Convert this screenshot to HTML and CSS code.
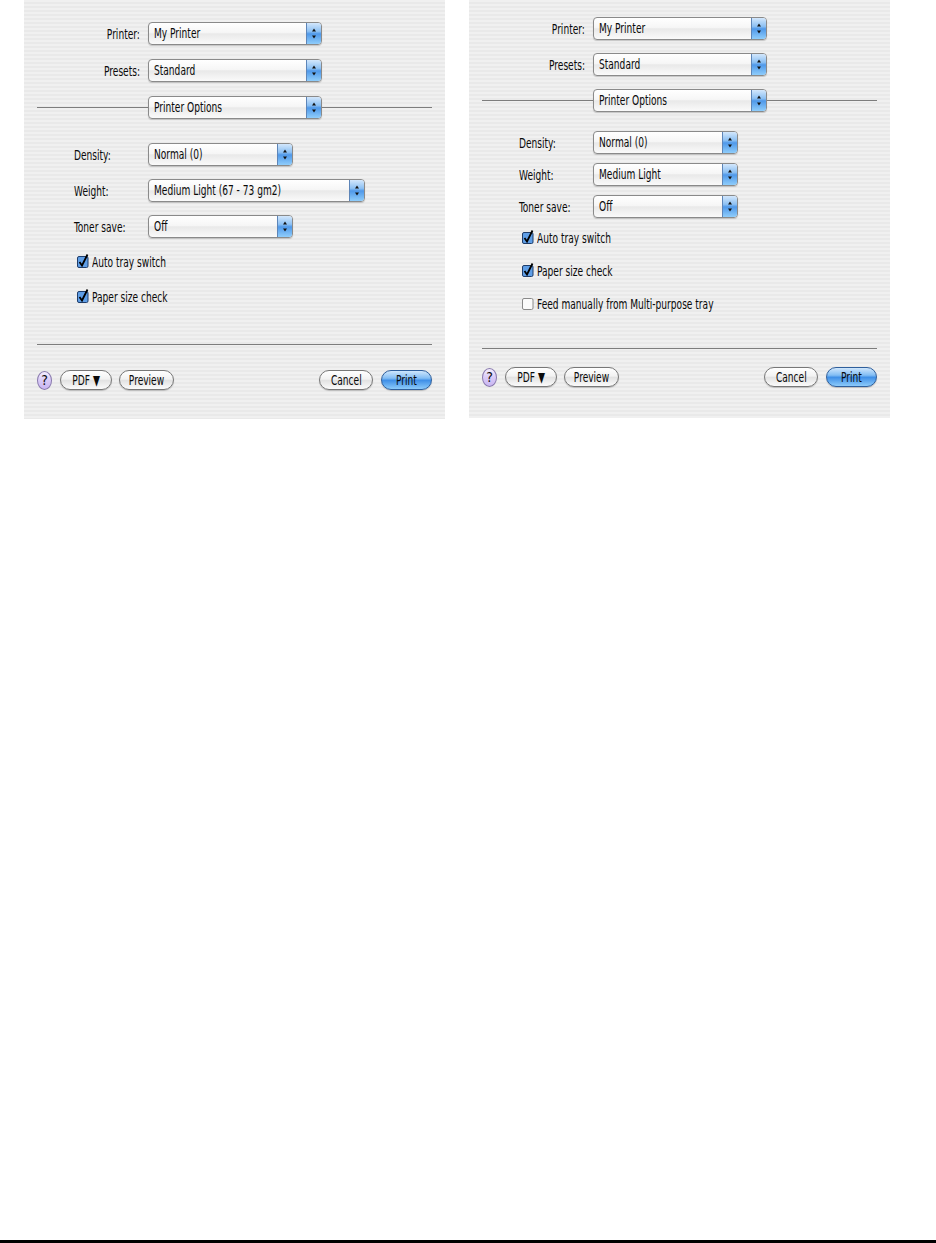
FILE: index.html
```
<!DOCTYPE html>
<html lang="en">
<head>
    <meta charset="UTF-8">
    <title>Printer Options</title>
    <link rel="stylesheet" href="styles.css">
</head>
<body>
<div class="page">
    <div class="dialogs">

        <!-- first dialog: paper weight with gm2 range -->
        <section class="dialog dialog-a">
            <div class="top-fields">
                <div class="field-row">
                    <span class="label"><span class="t">Printer:</span></span>
                    <div class="popup"><span class="popup-text"><span class="t">My Printer</span></span><span class="stepper"><svg width="14" height="21" viewBox="0 0 14 21"><path d="M5 8.5 L7 5.5 L9 8.5Z M5 12.5 L9 12.5 L7 15.5Z" fill="#111"/></svg></span></div>
                </div>
                <div class="field-row">
                    <span class="label"><span class="t">Presets:</span></span>
                    <div class="popup"><span class="popup-text"><span class="t">Standard</span></span><span class="stepper"><svg width="14" height="21" viewBox="0 0 14 21"><path d="M5 8.5 L7 5.5 L9 8.5Z M5 12.5 L9 12.5 L7 15.5Z" fill="#111"/></svg></span></div>
                </div>
                <div class="section-rule">
                    <span class="rule rule-left"></span>
                    <div class="popup"><span class="popup-text"><span class="t">Printer Options</span></span><span class="stepper"><svg width="14" height="21" viewBox="0 0 14 21"><path d="M5 8.5 L7 5.5 L9 8.5Z M5 12.5 L9 12.5 L7 15.5Z" fill="#111"/></svg></span></div>
                    <span class="rule rule-right"></span>
                </div>
            </div>

            <div class="options">
                <div class="option-row">
                    <span class="opt-label"><span class="t">Density:</span></span>
                    <div class="popup popup-short"><span class="popup-text"><span class="t">Normal (0)</span></span><span class="stepper"><svg width="14" height="21" viewBox="0 0 14 21"><path d="M5 8.5 L7 5.5 L9 8.5Z M5 12.5 L9 12.5 L7 15.5Z" fill="#111"/></svg></span></div>
                </div>
                <div class="option-row">
                    <span class="opt-label"><span class="t">Weight:</span></span>
                    <div class="popup popup-long"><span class="popup-text"><span class="t">Medium Light (67 - 73 gm2)</span></span><span class="stepper"><svg width="14" height="21" viewBox="0 0 14 21"><path d="M5 8.5 L7 5.5 L9 8.5Z M5 12.5 L9 12.5 L7 15.5Z" fill="#111"/></svg></span></div>
                </div>
                <div class="option-row">
                    <span class="opt-label"><span class="t">Toner save:</span></span>
                    <div class="popup popup-short"><span class="popup-text"><span class="t">Off</span></span><span class="stepper"><svg width="14" height="21" viewBox="0 0 14 21"><path d="M5 8.5 L7 5.5 L9 8.5Z M5 12.5 L9 12.5 L7 15.5Z" fill="#111"/></svg></span></div>
                </div>
            </div>

            <div class="checks">
                <div class="check">
                    <svg class="box" width="13" height="15" viewBox="0 0 13 15"><rect x="0.5" y="3.5" width="10.5" height="11" rx="1.5" fill="#5f9ee6" stroke="#1f3d6a"/><path d="M2.5 9 L5 12.5 L10.5 1.5" fill="none" stroke="#000" stroke-width="1.8"/></svg>
                    <span class="t">Auto tray switch</span>
                </div>
                <div class="check">
                    <svg class="box" width="13" height="15" viewBox="0 0 13 15"><rect x="0.5" y="3.5" width="10.5" height="11" rx="1.5" fill="#5f9ee6" stroke="#1f3d6a"/><path d="M2.5 9 L5 12.5 L10.5 1.5" fill="none" stroke="#000" stroke-width="1.8"/></svg>
                    <span class="t">Paper size check</span>
                </div>
            </div>

            <div class="footer">
                <div class="divider"></div>
                <div class="buttons">
                    <span class="help">?</span>
                    <span class="btn btn-pdf"><span class="t">PDF &#9660;</span></span>
                    <span class="btn btn-preview"><span class="t">Preview</span></span>
                    <span class="spacer"></span>
                    <span class="btn btn-cancel"><span class="t">Cancel</span></span>
                    <span class="btn btn-print"><span class="t">Print</span></span>
                </div>
            </div>
        </section>

        <!-- second dialog: extra manual feed option -->
        <section class="dialog dialog-b">
            <div class="top-fields">
                <div class="field-row">
                    <span class="label"><span class="t">Printer:</span></span>
                    <div class="popup"><span class="popup-text"><span class="t">My Printer</span></span><span class="stepper"><svg width="14" height="21" viewBox="0 0 14 21"><path d="M5 8.5 L7 5.5 L9 8.5Z M5 12.5 L9 12.5 L7 15.5Z" fill="#111"/></svg></span></div>
                </div>
                <div class="field-row">
                    <span class="label"><span class="t">Presets:</span></span>
                    <div class="popup"><span class="popup-text"><span class="t">Standard</span></span><span class="stepper"><svg width="14" height="21" viewBox="0 0 14 21"><path d="M5 8.5 L7 5.5 L9 8.5Z M5 12.5 L9 12.5 L7 15.5Z" fill="#111"/></svg></span></div>
                </div>
                <div class="section-rule">
                    <span class="rule rule-left"></span>
                    <div class="popup"><span class="popup-text"><span class="t">Printer Options</span></span><span class="stepper"><svg width="14" height="21" viewBox="0 0 14 21"><path d="M5 8.5 L7 5.5 L9 8.5Z M5 12.5 L9 12.5 L7 15.5Z" fill="#111"/></svg></span></div>
                    <span class="rule rule-right"></span>
                </div>
            </div>

            <div class="options">
                <div class="option-row">
                    <span class="opt-label"><span class="t">Density:</span></span>
                    <div class="popup popup-short"><span class="popup-text"><span class="t">Normal (0)</span></span><span class="stepper"><svg width="14" height="21" viewBox="0 0 14 21"><path d="M5 8.5 L7 5.5 L9 8.5Z M5 12.5 L9 12.5 L7 15.5Z" fill="#111"/></svg></span></div>
                </div>
                <div class="option-row">
                    <span class="opt-label"><span class="t">Weight:</span></span>
                    <div class="popup popup-short"><span class="popup-text"><span class="t">Medium Light</span></span><span class="stepper"><svg width="14" height="21" viewBox="0 0 14 21"><path d="M5 8.5 L7 5.5 L9 8.5Z M5 12.5 L9 12.5 L7 15.5Z" fill="#111"/></svg></span></div>
                </div>
                <div class="option-row">
                    <span class="opt-label"><span class="t">Toner save:</span></span>
                    <div class="popup popup-short"><span class="popup-text"><span class="t">Off</span></span><span class="stepper"><svg width="14" height="21" viewBox="0 0 14 21"><path d="M5 8.5 L7 5.5 L9 8.5Z M5 12.5 L9 12.5 L7 15.5Z" fill="#111"/></svg></span></div>
                </div>
            </div>

            <div class="checks">
                <div class="check">
                    <svg class="box" width="13" height="15" viewBox="0 0 13 15"><rect x="0.5" y="3.5" width="10.5" height="11" rx="1.5" fill="#5f9ee6" stroke="#1f3d6a"/><path d="M2.5 9 L5 12.5 L10.5 1.5" fill="none" stroke="#000" stroke-width="1.8"/></svg>
                    <span class="t">Auto tray switch</span>
                </div>
                <div class="check">
                    <svg class="box" width="13" height="15" viewBox="0 0 13 15"><rect x="0.5" y="3.5" width="10.5" height="11" rx="1.5" fill="#5f9ee6" stroke="#1f3d6a"/><path d="M2.5 9 L5 12.5 L10.5 1.5" fill="none" stroke="#000" stroke-width="1.8"/></svg>
                    <span class="t">Paper size check</span>
                </div>
                <div class="check">
                    <svg class="box" width="13" height="15" viewBox="0 0 13 15"><rect x="0.5" y="3.5" width="10.5" height="11" rx="1.5" fill="#fbfbfb" stroke="#8a8a8a"/></svg>
                    <span class="t">Feed manually from Multi-purpose tray</span>
                </div>
            </div>

            <div class="footer">
                <div class="divider"></div>
                <div class="buttons">
                    <span class="help">?</span>
                    <span class="btn btn-pdf"><span class="t">PDF &#9660;</span></span>
                    <span class="btn btn-preview"><span class="t">Preview</span></span>
                    <span class="spacer"></span>
                    <span class="btn btn-cancel"><span class="t">Cancel</span></span>
                    <span class="btn btn-print"><span class="t">Print</span></span>
                </div>
            </div>
        </section>
    </div>

    <div class="page-rule"></div>
</div>
</body>
</html>
```

FILE: styles.css
```
body {
    margin: 0;
    background-color: #fff;
    font-family: "DejaVu Sans Condensed", "DejaVu Sans", sans-serif;
    font-size: 14px;
    color: #0a0a0a;
}
.t {
    display: inline-block;
    white-space: nowrap;
    transform: scaleX(0.72);
    transform-origin: left center;
}
.page {
    height: 1243px;
    display: flex;
    flex-direction: column;
}
.dialogs {
    display: flex;
    gap: 24px;
    padding-left: 24px;
}
.dialog {
    width: 421px;
    height: 419px;
    box-sizing: border-box;
    padding: 0 13px;
    display: flex;
    flex-direction: column;
    background: repeating-linear-gradient(#f0f0f0 0 2px, #e9e9e9 2px 4px);
}
.dialog-b {
    height: 418px;
}

/* printer / presets / pane selector */
.top-fields {
    display: flex;
    flex-direction: column;
}
.dialog-a .top-fields {
    padding-top: 22px;
    gap: 14px;
}
.dialog-b .top-fields {
    padding-top: 17px;
    gap: 13px;
}
.field-row {
    display: flex;
    align-items: center;
}
.label {
    width: 103px;
    margin-right: 8px;
    text-align: right;
}
.label .t {
    transform-origin: right center;
}
.section-rule {
    display: flex;
    align-items: center;
}
.rule {
    height: 1px;
    background-color: #7d7d7d;
}
.rule-left {
    width: 111px;
}
.rule-right {
    flex: 1;
}

/* aqua popup button */
.popup {
    width: 174px;
    height: 23px;
    box-sizing: border-box;
    display: flex;
    border: 1px solid #8a8a8a;
    border-radius: 4px;
    background: linear-gradient(#ffffff, #f6f6f6 45%, #e9e9e9 52%, #fafafa);
    box-shadow: 0 1px 1px rgba(0, 0, 0, 0.18);
    overflow: hidden;
}
.popup-short {
    width: 145px;
}
.popup-long {
    width: 217px;
}
.popup-text {
    flex: 1;
    padding-left: 5px;
    line-height: 21px;
    overflow: hidden;
}
.stepper {
    width: 14px;
    border-left: 1px solid #5d85b8;
    background: linear-gradient(#d3e7fc, #8cc0f3 40%, #4f98e9 52%, #8fcdfb);
}
.stepper svg {
    display: block;
}

/* option rows */
.options {
    display: flex;
    flex-direction: column;
    padding-left: 37px;
}
.dialog-a .options {
    margin-top: 24px;
    gap: 13px;
}
.dialog-b .options {
    margin-top: 19px;
    gap: 9px;
}
.option-row {
    display: flex;
    align-items: center;
}
.opt-label {
    width: 74px;
}

/* checkboxes */
.checks {
    display: flex;
    flex-direction: column;
    padding-left: 40px;
}
.dialog-a .checks {
    margin-top: 15px;
    gap: 17px;
}
.dialog-b .checks {
    margin-top: 11px;
    gap: 15px;
}
.check {
    height: 18px;
    display: flex;
    align-items: center;
    gap: 2px;
}
.check .box {
    margin-top: -3px;
}

/* bottom bar */
.footer {
    margin-top: auto;
}
.dialog-a .footer {
    padding-bottom: 29px;
}
.dialog-b .footer {
    padding-bottom: 31px;
}
.divider {
    height: 1px;
    background-color: #7d7d7d;
}
.buttons {
    display: flex;
    align-items: center;
    height: 20px;
}
.dialog-a .buttons {
    margin-top: 25px;
}
.dialog-b .buttons {
    margin-top: 18px;
}
.help {
    width: 15px;
    height: 19px;
    box-sizing: border-box;
    border: 1px solid #8878ad;
    border-radius: 50%;
    background: linear-gradient(#f4eefe, #d9caf7 50%, #c9b6f2);
    text-align: center;
    line-height: 17px;
    font-size: 14px;
    margin-right: 8px;
}
.btn {
    height: 20px;
    box-sizing: border-box;
    border: 1px solid #777;
    border-radius: 10px;
    background: linear-gradient(#ffffff, #f2f2f2 45%, #e2e2e2 52%, #fbfbfb);
    box-shadow: 0 1px 1px rgba(0, 0, 0, 0.2);
    text-align: center;
    line-height: 18px;
}
.btn .t {
    transform-origin: center;
}
.btn-pdf {
    width: 52px;
    margin-right: 7px;
}
.btn-preview {
    width: 55px;
}
.spacer {
    flex: 1;
}
.btn-cancel {
    width: 54px;
    margin-right: 8px;
}
.btn-print {
    width: 51px;
    border-color: #2f5f9c;
    background: linear-gradient(#cfe6fc, #82bdf4 40%, #3f8fe7 52%, #8ccbfb);
}

.page-rule {
    margin-top: auto;
    height: 3px;
    background-color: #000;
}
```
